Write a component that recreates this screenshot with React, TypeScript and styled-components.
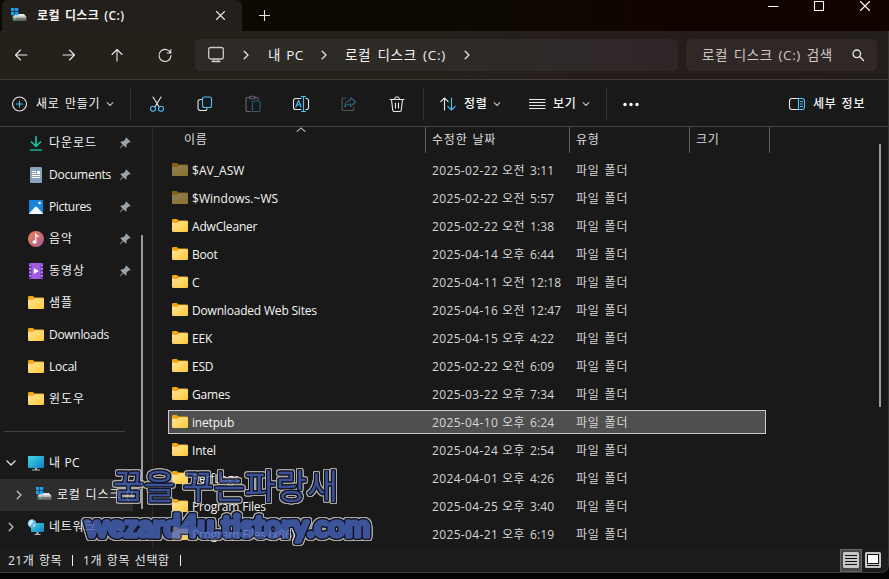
import React from "react";
import styled, { createGlobalStyle, css } from "styled-components";

const GlobalStyle = createGlobalStyle`
  * { box-sizing: border-box; }
  body { margin: 0; background: #050505; overflow: hidden; }
`;

const Window = styled.div`
  position: relative;
  width: 889px;
  height: 579px;
  display: flex;
  flex-direction: column;
  background: #040404;
  color: #f4f4f4;
  font: 12px/16px "Open Sans", "Noto Sans CJK KR", sans-serif;
  white-space: nowrap;
  overflow: hidden;
  svg { display: block; flex: none; overflow: visible; }
`;

const Label = styled.span<{ $ls?: number; $ws?: number; $size?: number; $weight?: number; $w?: number; $top?: number }>`
  flex: none;
  letter-spacing: ${(p) => p.$ls ?? 0}px;
  word-spacing: ${(p) => p.$ws ?? 0}px;
  font-size: ${(p) => p.$size ?? 12}px;
  font-weight: ${(p) => p.$weight ?? 400};
  width: ${(p) => (p.$w ? `${p.$w}px` : "auto")};
  padding-top: ${(p) => p.$top ?? 0}px;
`;

/* ---------- title bar ---------- */
const TitleBar = styled.header`
  height: 31px;
  display: flex;
  background: linear-gradient(90deg, #0c0a00 0 50%, #110400 75%, #100300);
`;
const Tab = styled.div`
  width: 240px;
  height: 31px;
  margin-left: 2px;
  padding: 0 17px 0 9px;
  display: flex;
  align-items: center;
  gap: 10px;
  border-radius: 6px 6px 0 0;
  background: #23201b;
`;
const Spacer = styled.div`
  flex: 1;
`;
const NewTab = styled.div`
  padding: 10px 0 0 17px;
`;
const WindowControls = styled.div`
  display: flex;
  gap: 36px;
  padding: 1px 19px 0 0;
`;

/* ---------- navigation ---------- */
const NavBar = styled.nav`
  height: 49px;
  display: flex;
  align-items: center;
  padding: 0 12px 0 0;
  border-bottom: 1px solid #3f3c39;
  background: linear-gradient(90deg, #24211b 0 45%, #261d1a 70%, #261c1a 90%, #221f1c);
`;
const NavButtons = styled.div`
  display: flex;
  width: 195px;
  padding-left: 13px;
  gap: 32px;
`;
const Field = styled.div<{ $w: number; $tone: string }>`
  width: ${(p) => p.$w}px;
  height: 32px;
  display: flex;
  align-items: center;
  border-radius: 5px;
  background: ${(p) => p.$tone};
`;
const AddressField = styled(Field)`
  padding-left: 13px;
  margin-right: 8px;
`;
const SearchField = styled(Field)`
  padding: 0 13px 0 16px;
  justify-content: space-between;
  color: #cfcac7;
`;
const Crumb = styled.div<{ $w: number }>`
  width: ${(p) => p.$w}px;
`;

/* ---------- command bar ---------- */
const CommandBar = styled.div`
  height: 47px;
  display: flex;
  align-items: center;
  background: #191919;
  border-bottom: 1px solid #454545;
  padding: 1px 23px 0 0;
`;
const Command = styled.button<{ $w: number; $pad: number }>`
  all: unset;
  box-sizing: border-box;
  width: ${(p) => p.$w}px;
  padding-left: ${(p) => p.$pad}px;
  height: 32px;
  display: flex;
  align-items: center;
  gap: 8px;
`;
const Divider = styled.i`
  width: 1px;
  height: 32px;
  background: #333;
`;

/* ---------- body ---------- */
const Body = styled.main`
  height: 421px;
  display: flex;
  background: #191919;
`;
const Sidebar = styled.aside`
  width: 153px;
  display: flex;
  flex-direction: column;
  border-right: 1px solid #2b2b2b;
`;
const SideScroll = styled.div`
  position: absolute;
  left: 141px;
  top: 235px;
  width: 2px;
  height: 274px;
  background: #9b9b9b;
`;
const SideItem = styled.div<{ $active?: boolean; $indent?: number }>`
  height: 32px;
  width: 133px;
  flex: none;
  display: flex;
  align-items: center;
  gap: 5px;
  padding-left: ${(p) => p.$indent ?? 28}px;
  background: ${(p) => (p.$active ? "#2d2d2d" : "none")};
  overflow: hidden;
`;
const PinSlot = styled.span`
  margin-left: auto;
  padding-right: 2px;
`;
const ArrowSlot = styled.span<{ $w: number }>`
  width: ${(p) => p.$w}px;
  flex: none;
`;
const SideRule = styled.hr`
  width: 121px;
  height: 1px;
  margin: 16px 0 15px 4px;
  border: 0;
  background: #404040;
`;
const Content = styled.section`
  flex: 1;
  min-width: 0;
`;
const columns = "257px 144px 120px 80px";
const HeadRow = styled.div`
  display: grid;
  grid-template-columns: 273px 144px 120px 80px;
  height: 26px;
  color: #dedede;
`;
const HeadCell = styled.div<{ $pad: number }>`
  padding: 5px 0 0 ${(p) => p.$pad}px;
  display: flex;
  border-right: 1px solid #5e5e5e;
`;
const SortMark = styled.span`
  margin: -5px 0 0 88px;
`;
const Rows = styled.div`
  padding: 5px 0 0 15px;
`;
const Row = styled.div<{ $selected?: boolean }>`
  width: 598px;
  height: 24px;
  margin-bottom: 4px;
  display: grid;
  grid-template-columns: ${columns};
  align-items: center;
  ${(p) =>
    p.$selected &&
    css`
      background: #4f4f4f;
      box-shadow: inset 0 0 0 1px #c9c9c9;
    `}
`;
const NameCell = styled.div`
  display: flex;
  align-items: center;
  gap: 4px;
  padding-left: 4px;
`;
const DateCell = styled.div`
  display: grid;
  grid-template-columns: 70px 28px 1fr;
  padding: 2px 0 0 7px;
  color: #d6d6d6;
`;
const TypeCell = styled.div`
  padding: 2px 0 0 7px;
  color: #d6d6d6;
`;
const ListScroll = styled.div`
  position: absolute;
  left: 879px;
  top: 144px;
  width: 2px;
  height: 263px;
  background: #9b9b9b;
`;

/* ---------- status bar ---------- */
const StatusBar = styled.footer`
  height: 25px;
  display: flex;
  align-items: center;
  padding-left: 8px;
  padding-right: 5px;
  border-bottom: 1px solid #3a3a3a;
  border-right: 1px solid #333;
  border-radius: 0 0 8px 0;
  background: #1c1c1c;
  color: #e6e6e6;
`;
const StatusBarMark = styled.i<{ $l: number; $r: number }>`
  width: 1px;
  height: 11px;
  margin: 0 ${(p) => p.$r}px 0 ${(p) => p.$l}px;
  background: #eee;
`;
const ViewButton = styled.span<{ $on?: boolean }>`
  width: ${(p) => (p.$on ? 22 : 21)}px;
  height: 23px;
  display: grid;
  place-items: center;
  background: ${(p) => (p.$on ? "#484848" : "none")};
  border: 1px solid ${(p) => (p.$on ? "#686868" : "transparent")};
`;
const Stamp = styled.div`
  position: absolute;
  left: 78px;
  top: 460px;
  opacity: 0.8;
`;
const StampText = styled.text<{ $ink: number }>`
  fill: #4562b8;
  stroke: #4562b8;
  stroke-width: ${(p) => p.$ink}px;
  filter: drop-shadow(1px 0 0 #101124) drop-shadow(-1px 0 0 #101124) drop-shadow(0 1px 0 #101124) drop-shadow(0 -1px 0 #101124)
    drop-shadow(1px 0 0 #cfcec8) drop-shadow(-1px 0 0 #cfcec8) drop-shadow(0 1px 0 #cfcec8) drop-shadow(0 -1px 0 #cfcec8);
`;
const EdgeLine = styled.div`
  position: absolute;
  right: 0;
  top: 31px;
  width: 1px;
  height: 530px;
  background: #363432;
`;

/* ---------- icons ---------- */
const Ico = ({ w = 16, h = 16, c = "#e8e8e8", s = 1.1, children }: { w?: number; h?: number; c?: string; s?: number; children: React.ReactNode }) => (
  <svg width={w} height={h} viewBox={`0 0 ${w} ${h}`} fill="none" stroke={c} strokeWidth={s} strokeLinecap="round" strokeLinejoin="round">
    {children}
  </svg>
);
const BLUE = "#4cc2ff";

const Chevron = ({ dir = "down", c = "#bdbdbd", s = 1.1 }: { dir?: "down" | "right" | "bigdown"; c?: string; s?: number }) => (
  <Ico w={8} h={8} c={c} s={s}>
    {dir === "right" ? <path d="M2.200 .3 6 4 2.200 7.700" /> : dir === "down" ? <path d="M1.200 2.700 4 5.500 6.800 2.700" /> : <path d="M0 2 4 6 8 2" />}
  </Ico>
);

const Folder = ({ faded }: { faded?: boolean }) => (
  <svg width="16" height="16" viewBox="0 0 16 16" opacity={faded ? 0.5 : 1}>
    <defs>
      <linearGradient id="folderFront" x1="0" y1="0" x2="1" y2="1">
        <stop offset="0" stopColor="#ffe69b" />
        <stop offset="1" stopColor="#ffc937" />
      </linearGradient>
    </defs>
    <path d="M0 2.300a1.300 1.300 0 0 1 1.300-1.300h3.500l1.700 1.400h8.200A1.300 1.300 0 0 1 16 3.700V8H0z" fill="#f2a50c" />
    <path d="M0 4.800h5.300L7 3.300h7.800A1.200 1.200 0 0 1 16 4.500v8.200a1.300 1.300 0 0 1-1.300 1.300H1.300A1.300 1.300 0 0 1 0 12.700z" fill="url(#folderFront)" />
  </svg>
);

const Drive = () => (
  <svg width="16" height="16" viewBox="0 0 16 16">
    <path d="M4.500 6H13L15.500 9H1.500z" fill="#e9e9e9" />
    <rect x="1.500" y="8.700" width="14" height="4" rx=".7" fill="#6f7373" />
    <path d="M2 8.800h13v1H2z" fill="#c9cccc" />
    <circle cx="4.500" cy="11" r=".9" fill="#32e33c" />
    <path d="M0 0h3.300v3.300H0zM4 0h3.300v3.300H4zM0 4h3.300v3.300H0zM4 4h3.300v3.300H4z" fill="#18a0f2" />
  </svg>
);

const Pin = () => (
  <svg width="12" height="12" viewBox="0 0 12 12">
    <path d="M7.300.4 11.600 4.700 10.700 5.500 9.500 5.600 7.600 7.600 7.500 9.900 6.700 10.600 4.300 8.200 1.200 11.300.6 10.900 3.700 7.600 1.300 5.200 2.100 4.400 4.400 4.300 6.400 2.500 6.400 1.200z" fill="#9aa3aa" />
  </svg>
);

const Monitor = ({ net }: { net?: boolean }) => (
  <svg width="16" height="16" viewBox="0 0 16 16">
    <defs>
      <linearGradient id="screen" x1="0" y1="0" x2="1" y2="1">
        <stop offset="0" stopColor="#42dbe0" />
        <stop offset="1" stopColor="#117dc5" />
      </linearGradient>
    </defs>
    <rect x={net ? 3 : 0} y={net ? 4 : 1} width={net ? 13 : 16} height={net ? 9 : 12} rx=".8" fill="url(#screen)" />
    <path d={net ? "M8.500 13h2v2h2v.9h-6V15h2z" : "M7 13h2v1.500h3v1H4v-1h3z"} fill="#aeb9bf" />
    {net && (
      <g>
        <circle cx="4" cy="4.500" r="4.300" fill="#68b6e5" />
        <path d="M1 3c2-3 4-2 4 0S3 4 3 6 1 6 .5 5z" fill="#d4ecf6" />
        <path d="M5.500 5c2 0 2 1 1 2.500L5 8z" fill="#c5e3f1" />
      </g>
    )}
  </svg>
);

const Downloads = () => (
  <Ico c="#1fbf9b" s={1.7}>
    <path d="M8 1.500v9.500M3.500 7 8 11.400 12.500 7" />
    <path d="M2.500 15h11" stroke="#18b48d" />
  </Ico>
);
const Docs = () => (
  <svg width="16" height="16" viewBox="0 0 16 16">
    <rect x="2" y="0" width="12" height="16" rx="1.200" fill="#8aa2bd" />
    <path d="M4 4.500h4M4 6.500h4M4 8.500h8M4 10.500h8" stroke="#fff" strokeWidth="1.100" />
    <path d="M9 4h3v3H9z" fill="#fff" />
  </svg>
);
const Pictures = () => (
  <svg width="16" height="16" viewBox="0 0 16 16">
    <rect x="1" y="1" width="14" height="14" rx="1" fill="#1784d8" />
    <path d="M1 14.500 7 8q1-1 2 0l6 6.500q-.3.500-1 .5H2q-.7 0-1-.5z" fill="#f1f8fd" />
    <circle cx="11.500" cy="4" r="1.300" fill="#fff" />
  </svg>
);
const Music = () => (
  <svg width="16" height="16" viewBox="0 0 16 16">
    <defs>
      <linearGradient id="disc" x1="0" y1="0" x2="1" y2="1">
        <stop offset="0" stopColor="#f0804e" />
        <stop offset="1" stopColor="#a85a9c" />
      </linearGradient>
    </defs>
    <circle cx="8" cy="8" r="8" fill="url(#disc)" />
    <ellipse cx="6.500" cy="11" rx="2" ry="1.800" fill="#fff" />
    <path d="M7.800 11V3.500c1 1.500 2.500 1.500 3 2.500" stroke="#fff" strokeWidth="1.300" fill="none" />
  </svg>
);
const Videos = () => (
  <svg width="16" height="16" viewBox="0 0 16 16">
    <rect x="1" y="0" width="14" height="16" rx="1" fill="#a35be4" />
    <path d="M1 .8h2.500v14.400H1zM12.500 .8H15v14.400h-2.500z" fill="#6a2db4" />
    <path d="M2.200 1.500v13M13.800 1.500v13" stroke="#dcbcf8" strokeWidth="1.400" strokeDasharray="1.500 2" />
    <path d="M5.800 5v6l5-3z" fill="#fff" />
  </svg>
);

/* ---------- data ---------- */
const quickItems = [
  { label: "다운로드", icon: <Downloads />, pin: true, ls: 1 },
  { label: "Documents", icon: <Docs />, pin: true, ls: -0.25 },
  { label: "Pictures", icon: <Pictures />, pin: true, ls: -0.35 },
  { label: "음악", icon: <Music />, pin: true, ls: 1 },
  { label: "동영상", icon: <Videos />, pin: true, ls: 1 },
  { label: "샘플", icon: <Folder />, ls: 1 },
  { label: "Downloads", icon: <Folder />, ls: -0.3 },
  { label: "Local", icon: <Folder />, ls: -0.2 },
  { label: "윈도우", icon: <Folder />, ls: 1 },
];

type Entry = [name: string, date: string, half: string, time: string];
const entries: Entry[] = [
  ["$AV_ASW", "2025-02-22", "오전", "3:11"],
  ["$Windows.~WS", "2025-02-22", "오전", "5:57"],
  ["AdwCleaner", "2025-02-22", "오전", "1:38"],
  ["Boot", "2025-04-14", "오후", "6:44"],
  ["C", "2025-04-11", "오전", "12:18"],
  ["Downloaded Web Sites", "2025-04-16", "오전", "12:47"],
  ["EEK", "2025-04-15", "오후", "4:22"],
  ["ESD", "2025-02-22", "오전", "6:09"],
  ["Games", "2025-03-22", "오후", "7:34"],
  ["inetpub", "2025-04-10", "오후", "6:24"],
  ["Intel", "2025-04-24", "오후", "2:54"],
  ["PerfLogs", "2024-04-01", "오후", "4:26"],
  ["Program Files", "2025-04-25", "오후", "3:40"],
  ["Program Files (x86)", "2025-04-21", "오후", "6:19"],
];

export default function App() {
  return (
    <Window>
      <GlobalStyle />
      <TitleBar>
        <Tab>
          <Drive />
          <Label $ls={0.4} $ws={1.5} $weight={600}>로컬 디스크 (C:)</Label>
          <Spacer />
          <Ico w={9} h={9}><path d="M.5.500 8.500 8.500M8.500.500.500 8.500" /></Ico>
        </Tab>
        <NewTab><Ico w={11} h={11}><path d="M5.500.500v10M.500 5.500h10" /></Ico></NewTab>
        <Spacer />
        <WindowControls>
          <Ico w={10} h={10} c="#fff"><path d="M.5 5.500h9.500" /></Ico>
          <Ico w={10} h={10} c="#fff"><path d="M.500.500h9v9h-9z" /></Ico>
          <Ico w={10} h={10} c="#fff"><path d="M.500.500 9.500 9.500M9.500.500.500 9.500" /></Ico>
        </WindowControls>
      </TitleBar>

      <NavBar>
        <NavButtons>
          <Ico><path d="M14 8H2.500M7.500 3 2.500 8l5 5" /></Ico>
          <Ico><path d="M2 8h11.500M8.500 3l5 5-5 5" /></Ico>
          <Ico><path d="M8 14V2.500M3 7.500l5-5 5 5" /></Ico>
          <Ico><path d="M13.500 6A6 6 0 1 0 14 8.500M13.800 2.500V6h-3.500" /></Ico>
        </NavButtons>
        <AddressField $w={483} $tone="linear-gradient(90deg,#2e2b27 0 50%,#30292a 80%,#302526)">
          <Ico c="#c9c9c7" s={1.3}><rect x=".7" y=".5" width="14.600" height="11.500" rx="2" /><path d="M6 12.500v2M10 12.500v2M4 14.500h8" /></Ico>
          <Crumb $w={18} />
          <Crumb $w={26}><Chevron dir="right" c="#ddd" s={1.4} /></Crumb>
          <Label $size={13.5} $w={52} $ls={0.6} $ws={1}>내 PC</Label>
          <Crumb $w={25}><Chevron dir="right" c="#ddd" s={1.4} /></Crumb>
          <Label $size={13.5} $w={118} $ls={0.7} $ws={2}>로컬 디스크 (C:)</Label>
          <Chevron dir="right" c="#ddd" s={1.4} />
        </AddressField>
        <SearchField $w={191} $tone="#302826">
          <Label $size={13.5} $w={131} $ls={0.6} $ws={1.6}>로컬 디스크 (C:) 검색</Label>
          <Ico w={12} h={12} s={1.3}><circle cx="4.800" cy="4.800" r="3.800" /><path d="m7.800 7.800 3.700 3.700" /></Ico>
        </SearchField>
      </NavBar>

      <CommandBar>
        <Command $w={130} $pad={12}>
          <Ico><circle cx="7.500" cy="8" r="7" /><path d="M7.500 5v6M4.500 8h6" stroke={BLUE} /></Ico>
          <Label $ls={0.8} $ws={1.3} $w={62} $top={1}>새로 만들기</Label>
          <Chevron />
        </Command>
        <Divider />
        <Command $w={48} $pad={18}>
          <Ico><path d="M4 1 10 10.700M12 1 6 10.700" /><g stroke={BLUE}><circle cx="4" cy="12.700" r="2.500" /><circle cx="12" cy="12.700" r="2.500" /></g></Ico>
        </Command>
        <Command $w={48} $pad={18}>
          <Ico><path d="M4.500 3.500H3A2 2 0 0 0 1 5.500V12a2.500 2.500 0 0 0 2.500 2.500H8A2 2 0 0 0 10 12.800" /><rect x="5.500" y="1" width="9" height="10.500" rx="2" stroke={BLUE} /></Ico>
        </Command>
        <Command $w={48} $pad={18}>
          <Ico c="#666"><path d="M5 1.500H2A1 1 0 0 0 1 2.500V14.500A1 1 0 0 0 2 15.500H6M9.500 1.500H12A1 1 0 0 1 13 2.500V3.500" /><rect x="4.500" y=".3" width="5.500" height="2.500" rx="1" /><rect x="7.500" y="5" width="7.500" height="10.500" rx="1" stroke="#285f7b" /></Ico>
        </Command>
        <Command $w={48} $pad={18}>
          <Ico><path d="M8 2.500H2.500A2 2 0 0 0 .5 4.500V11.500A2 2 0 0 0 2.500 13.500H8M13 2.500A2 2 0 0 1 15.500 4.500V11.500A2 2 0 0 1 13 13.500" /><g stroke={BLUE}><path d="M2.800 11 5.500 4.500 8.200 11M3.800 9h3.500M10.500.500v15M8.500.500h4M8.500 15.500h4" /></g></Ico>
        </Command>
        <Command $w={48} $pad={18}>
          <Ico c="#565656"><path d="M5 2H3A2 2 0 0 0 1 4V12.500A2 2 0 0 0 3 14.500H11A2 2 0 0 0 13 12.500V11.500" /><path d="M9.500 1.500 14.500 6 9.500 10.500V8Q6 8 3.800 11 4 5 9.500 4.300z" stroke="#2c6585" /></Ico>
        </Command>
        <Command $w={52} $pad={18}>
          <Ico><path d="M1 3.500H15M5.500 3Q6 .8 8 .8T10.500 3M2.500 3.500 3.700 14Q3.900 15.500 5 15.500H11Q12.100 15.500 12.300 14L13.500 3.500M6.500 7v5M9.500 7v5" /></Ico>
        </Command>
        <Divider />
        <Command $w={89} $pad={16}>
          <Ico><path d="M4.500 14V2M.8 5.700 4.500 2 8.200 5.700" /><path d="M11.500 2v12M7.800 10.300 11.500 14 15.200 10.300" stroke={BLUE} /></Ico>
          <Label $w={21} $weight={500} $ls={0.8} $top={1}>정렬</Label>
          <Chevron />
        </Command>
        <Command $w={93} $pad={16}>
          <Ico><path d="M.5 3.500h15.500M.5 6.500h15.500M.5 9.500h15.500M.5 12.500h15.500" /></Ico>
          <Label $w={21} $weight={500} $ls={0.8} $top={1}>보기</Label>
          <Chevron />
        </Command>
        <Divider />
        <Command $w={40} $pad={16}>
          <Ico c="none"><g fill="#fff"><circle cx="2" cy="8.500" r="1.700" /><circle cx="8" cy="8.500" r="1.700" /><circle cx="14" cy="8.500" r="1.700" /></g></Ico>
        </Command>
        <Spacer />
        <Ico><path d="M10 2.500H3A2.500 2.500 0 0 0 .5 5V11A2.500 2.500 0 0 0 3 13.500H10" /><path d="M9.500 2.500H13A2.500 2.500 0 0 1 15.500 5V11A2.500 2.500 0 0 1 13 13.500H9.500zM11.500 5.500h2M11.500 8h2M11.500 10.500h2" stroke={BLUE} /></Ico>
        <Crumb $w={8} />
        <Label $ls={0.8} $ws={1} $w={53} $weight={500} $top={1}>세부 정보</Label>
      </CommandBar>

      <Body>
        <Sidebar>
          {quickItems.map((q) => (
            <SideItem key={q.label}>
              {q.icon}
              <Label $ls={q.ls}>{q.label}</Label>
              {q.pin && <PinSlot><Pin /></PinSlot>}
            </SideItem>
          ))}
          <SideRule />
          <SideItem $indent={7}>
            <ArrowSlot $w={16}><Chevron dir="bigdown" c="#ddd" s={1.4} /></ArrowSlot>
            <Monitor />
            <Label $ls={0.2} $ws={1}>내 PC</Label>
          </SideItem>
          <SideItem $indent={15} $active>
            <ArrowSlot $w={16}><Chevron dir="right" c="#bbb" s={1.4} /></ArrowSlot>
            <Drive />
            <Label $ls={0.8} $ws={1}>로컬 디스크 (C:)</Label>
          </SideItem>
          <SideItem $indent={7}>
            <ArrowSlot $w={16}><Chevron dir="right" c="#bbb" s={1.4} /></ArrowSlot>
            <Monitor net />
            <Label $ls={0.7}>네트워크</Label>
          </SideItem>
        </Sidebar>
        <Content>
          <HeadRow>
            <HeadCell $pad={31}>
              <Label $ls={0.8}>이름</Label>
              <SortMark><Ico w={10} h={6} c="#aaa"><path d="M1 4.500 5 .800 9 4.500" /></Ico></SortMark>
            </HeadCell>
            <HeadCell $pad={6}><Label $ls={0.8} $ws={1}>수정한 날짜</Label></HeadCell>
            <HeadCell $pad={6}><Label $ls={0.8}>유형</Label></HeadCell>
            <HeadCell $pad={6}><Label $ls={0.8}>크기</Label></HeadCell>
          </HeadRow>
          <Rows>
            {entries.map(([name, date, half, time]) => (
              <Row key={name} $selected={name === "inetpub"}>
                <NameCell>
                  <Folder faded={name.startsWith("$")} />
                  <Label $ls={name.startsWith("$") ? 0.05 : -0.19} $top={2}>{name}</Label>
                </NameCell>
                <DateCell>
                  <Label $ls={0.35}>{date}</Label>
                  <Label $ls={0.5}>{half}</Label>
                  <Label $ls={0.15}>{time}</Label>
                </DateCell>
                <TypeCell><Label $ls={0.8} $ws={1}>파일 폴더</Label></TypeCell>
              </Row>
            ))}
          </Rows>
        </Content>
      </Body>

      <StatusBar>
        <Label $ls={0.5} $ws={1} $top={1}>21개 항목</Label>
        <StatusBarMark $l={10} $r={10} />
        <Label $ls={0.6} $ws={1} $top={1}>1개 항목 선택함</Label>
        <StatusBarMark $l={10} $r={0} />
        <Spacer />
        <ViewButton $on>
          <svg width="16" height="16"><rect width="16" height="16" rx="1.500" fill="#c6c6c6" /><path d="M2 3.500h12M2 6.500h12M2 9.500h12M2 12.500h12" stroke="#111" /></svg>
        </ViewButton>
        <ViewButton>
          <svg width="16" height="16"><rect width="16" height="16" rx="1.500" fill="#c6c6c6" /><rect x="2.500" y="2.500" width="11" height="9" fill="#fff" stroke="#111" /><path d="M2 13.500h12" stroke="#111" /></svg>
        </ViewButton>
      </StatusBar>

      <SideScroll />
      <ListScroll />
      <EdgeLine />
      <Stamp>
        <svg width="300" height="90" strokeLinejoin="round" strokeLinecap="round">
          <StampText $ink={0.3} x="35" y="39" fontFamily="Noto Sans CJK KR" fontSize="34" fontWeight="350" textLength="225" lengthAdjust="spacingAndGlyphs">꿈을 꾸는파랑새</StampText>
          <StampText $ink={3.4} x="7" y="77" fontFamily="Lato" fontSize="31" fontWeight="900" textLength="285" lengthAdjust="spacingAndGlyphs">wezard4u.tistory.com</StampText>
        </svg>
      </Stamp>
    </Window>
  );
}
